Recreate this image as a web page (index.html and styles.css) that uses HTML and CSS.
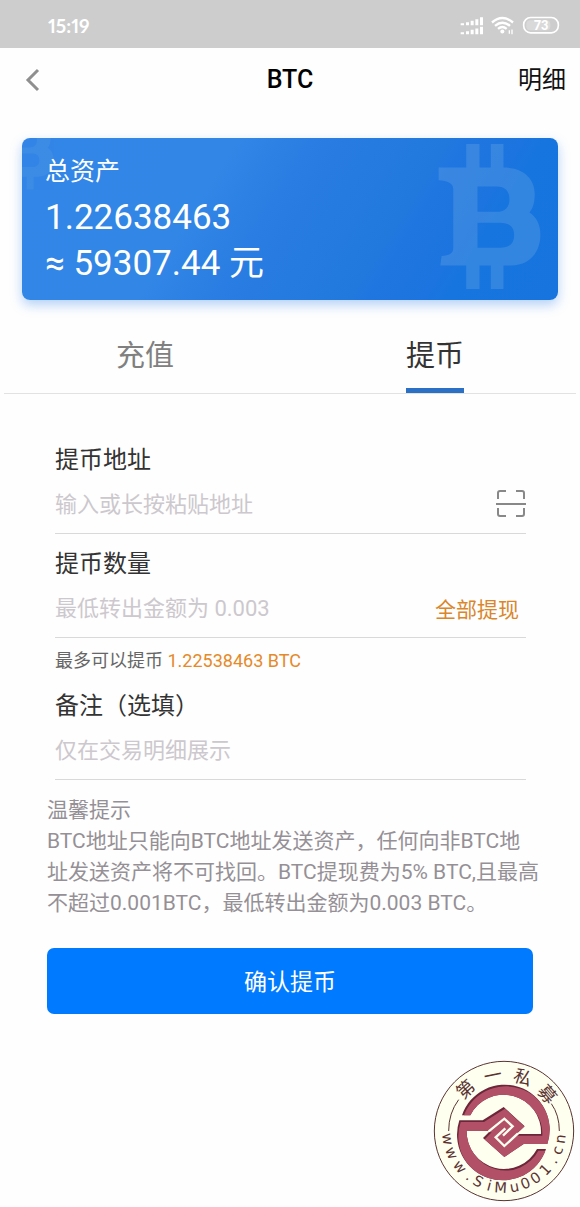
FILE: index.html
```html
<!DOCTYPE html>
<html lang="zh-CN">
<head>
<meta charset="utf-8">
<meta name="viewport" content="width=device-width, initial-scale=1">
<title>BTC 提币</title>
<link rel="stylesheet" href="styles.css">
</head>
<body>
<div class="status">
  <span class="status-time">15:19</span>
  <svg class="status-icons" viewBox="60 45 300 62" aria-label="信号与电量">
    <g fill="#fff">
      <path d="M62 69h10v6H62zM78 66h9v9h-9zM92 62h9v13h-9zM106 57h9v18h-9zM120 51h9v24h-9z"/>
      <path d="M62 96h10v6H62zM78 93h9v9h-9zM92 89h9v13h-9zM106 85h9v17h-9zM120 80h9v22h-9z"/>
      <circle cx="187" cy="94" r="6"/>
      <path d="M206 90h4v11h-4zM214 88h4v14h-4z"/>
    </g>
    <g fill="none" stroke="#fff" stroke-width="7">
      <path d="M156 67Q187 40 219 67M165 77Q187 58 210 77M174 86Q187 75 200 86"/>
      <rect x="251" y="52" width="104" height="46" rx="21" stroke-width="5"/>
    </g>
    <rect x="259" y="60" width="72" height="30" rx="12" fill="#fff" opacity=".25"/>
    <text x="303" y="89" class="battery-text">73</text>
  </svg>
</div>

<header class="nav">
  <button class="back" type="button" aria-label="返回">
    <svg width="16" height="24" viewBox="0 0 16 24" fill="none" stroke="#8f8f8f" stroke-width="3"><path d="M14 2 4 12l10 10"/></svg>
  </button>
  <h1 class="title">BTC</h1>
  <a class="detail" href="#">明细</a>
</header>

<main>
  <section class="card">
    <svg class="coin coin-small" viewBox="440 60 320 460" aria-hidden="true"><use href="#coin"/></svg>
    <svg class="coin coin-large" viewBox="440 60 320 460" aria-hidden="true">
      <path id="coin" fill="#5f9fe0" fill-opacity=".4" fill-rule="evenodd" d="M530 72h40v71h34V72h38v71c60 0 94 33 94 80 0 24-5 42-16 55 21 14 33 35 33 67 0 55-35 92-87 92h-24v71h-38v-71h-34v71h-40v-71h-78l4-28c25-3 35-8 35-26V207c0-16-16-25-44-26v-38h83zM564 200v76h58c25 0 38-14 38-38s-13-38-38-38zM564 309v75h68c29 0 42-14 42-38s-13-37-42-37z"/>
    </svg>
    <p class="card-label">总资产</p>
    <p class="card-value">1.22638463</p>
    <p class="card-value">≈ 59307.44 元</p>
  </section>

  <nav class="tabs">
    <button class="tab" type="button"><span class="tab-text">充值</span></button>
    <button class="tab tab-active" type="button"><span class="tab-text">提币</span></button>
  </nav>

  <form class="form">
    <div class="field">
      <label class="label" for="address">提币地址</label>
      <div class="row">
        <input class="input" id="address" type="text" placeholder="输入或长按粘贴地址">
        <button class="scan" type="button" aria-label="扫一扫">
          <svg width="30" height="30" viewBox="0 0 30 30" fill="none" stroke="#888" stroke-width="2"><path d="M2 10V4q0-2 2-2h6M20 2h6q2 0 2 2v6M28 19v6q0 2-2 2h-6M10 27H4q-2 0-2-2v-6M0 15h30"/></svg>
        </button>
      </div>
    </div>
    <div class="field">
      <label class="label" for="amount">提币数量</label>
      <div class="row">
        <input class="input" id="amount" type="text" placeholder="最低转出金额为 0.003">
        <button class="all" type="button">全部提现</button>
      </div>
    </div>
    <p class="hint">最多可以提币 <span class="hint-value">1.22538463 BTC</span></p>
    <div class="field">
      <label class="label" for="note">备注（选填）</label>
      <div class="row">
        <input class="input" id="note" type="text" placeholder="仅在交易明细展示">
      </div>
    </div>
  </form>

  <section class="notice">
    <p class="tips">温馨提示<br>BTC地址只能向BTC地址发送资产，任何向非BTC地<br>址发送资产将不可找回。BTC提现费为5% BTC,且最高<br>不超过0.001BTC，最低转出金额为0.003 BTC。</p>
    <button class="submit" type="button">确认提币</button>
  </section>
</main>

<footer class="footer">
  <svg class="seal" viewBox="23 31 426 426">
    <defs>
      <path id="arc-top" d="M85 244A151 151 0 0 1 387 244"/>
      <path id="arc-bottom" d="M51 244A185 185 0 0 0 421 244"/>
      <path id="emblem" d="M102 212H172L235 172 298 230 273 253H347A112 112 0 0 0 135 197H110A135 135 0 0 1 366 283H295L237 322 173 265 195 243H124A112 112 0 0 0 335 298H362A136 136 0 0 1 102 212Z"/>
      <clipPath id="emblem-clip"><use href="#emblem"/></clipPath>
    </defs>
    <circle cx="236" cy="244" r="209" fill="#fffff0" stroke="#5a3330" stroke-width="3"/>
    <path d="M70 244Q70 190 100 150M402 244Q402 196 378 162" fill="none" stroke="#5a3330" stroke-width="3"/>
    <use href="#emblem" fill="#6b2638"/>
    <g clip-path="url(#emblem-clip)"><use href="#emblem" x="4" y="5" fill="#b25068"/></g>
    <path d="M190 245 237 207 262 230 233 258M278 251 237 289 211 263 240 236" fill="none" stroke="#fffff0" stroke-width="7"/>
    <text class="seal-cn" x="125 207 288 368"><textPath href="#arc-top">第一私募</textPath></text>
    <text class="seal-url" x="26 74 126 170 203 242 279 325 362 400 442 481 517 555"><textPath href="#arc-bottom">www.SiMu001.cn</textPath></text>
  </svg>
</footer>
</body>
</html>
```

FILE: styles.css
```css
* {
  box-sizing: border-box;
}

body {
  margin: 0;
  background: #fefefe;
  color: #333;
  font-family: Roboto, "Noto Sans CJK SC", sans-serif;
}

h1,
p {
  margin: 0;
}

button,
input {
  padding: 0;
  border: 0;
  background: none;
  font-family: inherit;
}

.status {
  display: flex;
  align-items: center;
  justify-content: space-between;
  height: 48px;
  padding: 3px 20px 0 48px;
  background: #cdcdcd;
}

.status-time {
  color: #fff;
  font-family: Lato, sans-serif;
  font-size: 19px;
  font-variant-numeric: proportional-nums;
  font-weight: 700;
}

.status-icons {
  width: 100px;
  height: 21px;
}

.battery-text {
  fill: #fff;
  font-family: Lato, sans-serif;
  font-size: 38px;
  font-weight: 900;
  text-anchor: middle;
}

.nav {
  display: grid;
  grid-template-columns: 1fr auto 1fr;
  align-items: center;
  height: 64px;
  padding: 0 14px;
  line-height: 32px;
}

.back {
  display: flex;
  width: 32px;
  padding-left: 10px;
}

.title {
  color: #000;
  font-size: 25px;
  font-weight: 500;
}

.detail {
  justify-self: end;
  color: #111;
  font-size: 24px;
  text-decoration: none;
}

.card {
  position: relative;
  margin: 26px 22px 0;
  padding: 11px 23px 13px;
  overflow: hidden;
  border-radius: 8px;
  background: linear-gradient(122deg, #3286e7 0%, #3186e6 34%, #2a7de2 46%, #267be0 56%, #2179dd 67%, #2076e1 70%, #1b74df 79%, #1775df 82%, #1774de 100%);
  box-shadow: 0 5px 12px rgba(40, 125, 235, 0.35);
  color: #fff;
  line-height: 46px;
}

.card-label {
  position: relative;
  font-size: 25px;
}

.card-value {
  position: relative;
  font-size: 35px;
}

.coin {
  position: absolute;
}

.coin-large {
  top: 2px;
  right: 15px;
  width: 107px;
  height: 153px;
}

.coin-small {
  top: -30px;
  left: -25px;
  width: 58px;
  height: 84px;
  opacity: 0.6;
}

.tabs {
  display: flex;
  flex-wrap: wrap;
  margin-top: 16px;
}

.tabs::after {
  content: "";
  flex: 1 0 90%;
  height: 1px;
  margin: 0 4px;
  background: #e2e2e2;
}

.tab {
  display: flex;
  flex: 1 0 40%;
  justify-content: center;
  color: #808080;
  font-size: 29px;
  line-height: 64px;
}

.tab-text {
  padding-top: 8px;
  border-bottom: 5px solid transparent;
}

.tab-active {
  color: #333;
}

.tab-active .tab-text {
  border-color: #2b70c4;
}

.form {
  padding: 43px 54px 0 55px;
}

.field {
  margin-bottom: 7px;
  border-bottom: 1px solid #d9d9d9;
}

.label {
  display: block;
  font-size: 24px;
  line-height: 46px;
}

.row {
  display: flex;
  align-items: center;
  height: 50px;
  padding-bottom: 8px;
}

.input {
  flex: 1;
  min-width: 0;
  height: 42px;
  outline: 0;
  color: #333;
  font-size: 22px;
}

.input::placeholder {
  color: #ccc8cd;
}

.scan {
  display: flex;
}

.all {
  padding-right: 7px;
  color: #da862b;
  font-size: 21px;
}

.hint {
  margin-top: -7px;
  color: #666;
  font-size: 18px;
  line-height: 45px;
}

.hint-value {
  color: #e58a2a;
}

.notice {
  padding: 8px 47px 0;
}

.tips {
  color: #959096;
  font-size: 21px;
  line-height: 31px;
  white-space: nowrap;
}

.submit {
  display: block;
  width: 100%;
  height: 66px;
  margin-top: 29px;
  padding-bottom: 3px;
  border-radius: 7px;
  background: #007aff;
  color: #fff;
  font-size: 23px;
}

.footer {
  display: flex;
  justify-content: flex-end;
  padding: 46px 5px 4px;
}

.seal {
  width: 142px;
  height: 142px;
}

.seal-cn,
.seal-url {
  fill: #5a3330;
  text-anchor: middle;
}

.seal-cn {
  font-family: "Noto Sans CJK SC", sans-serif;
  font-size: 54px;
}

.seal-url {
  font-family: "DejaVu Sans", sans-serif;
  font-size: 44px;
}
```
